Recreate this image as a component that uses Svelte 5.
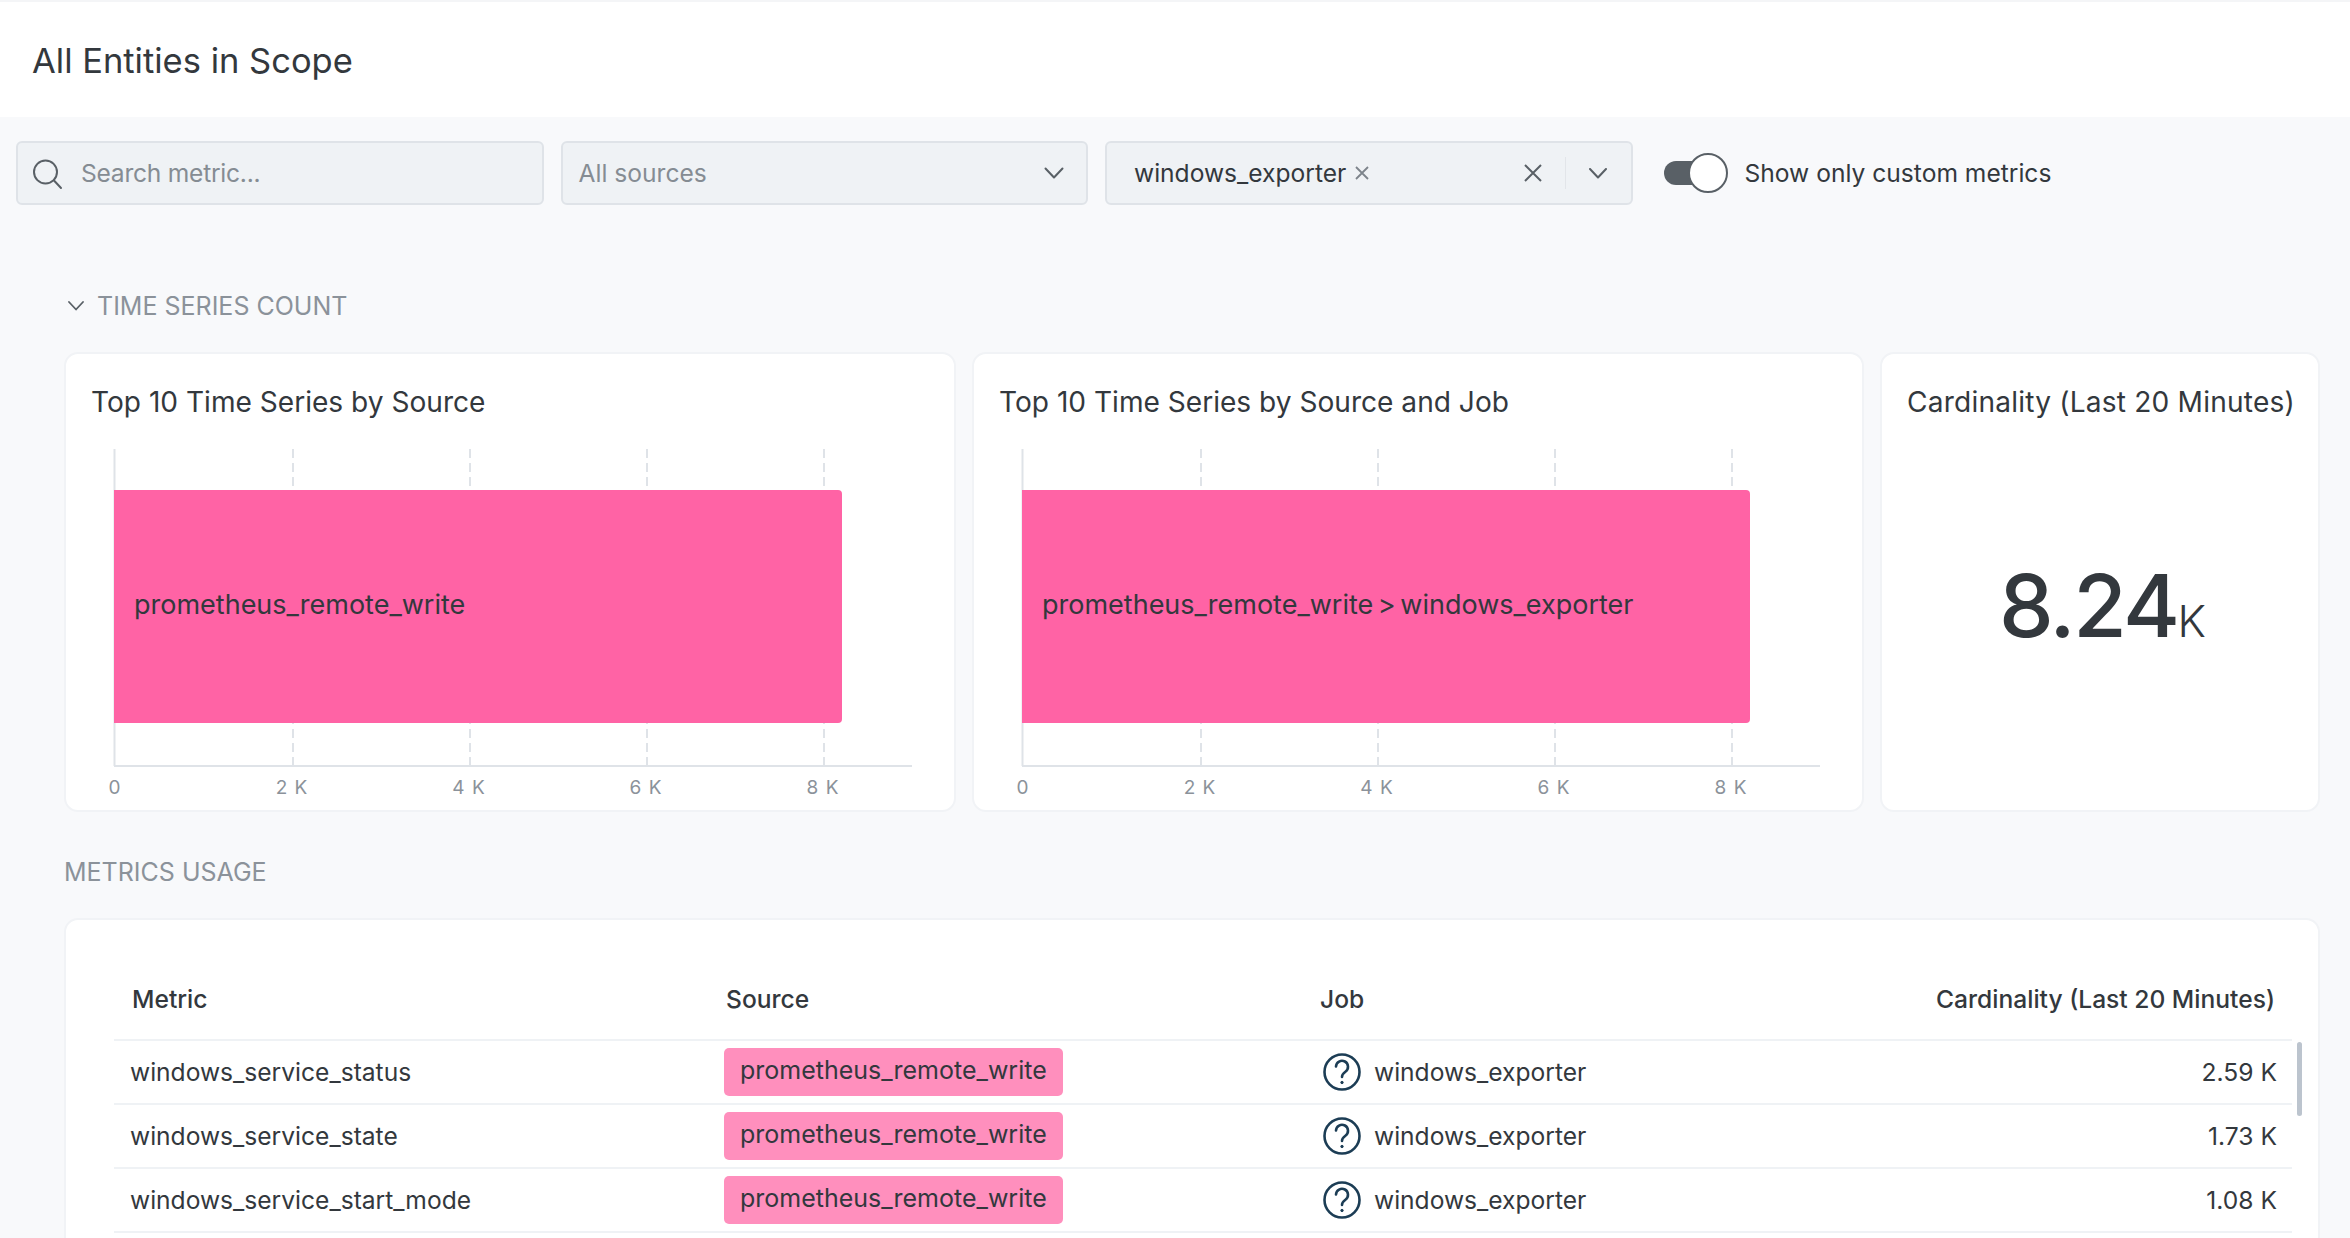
<script>
	const ticks = [
		{ x: 51, label: '0' },
		{ x: 228, label: '2 K' },
		{ x: 405, label: '4 K' },
		{ x: 582, label: '6 K' },
		{ x: 759, label: '8 K' }
	];
	const charts = [
		{ title: 'Top 10 Time Series by Source', label: 'prometheus_remote_write' },
		{ title: 'Top 10 Time Series by Source and Job', label: 'prometheus_remote_write > windows_exporter' }
	];
	const rows = [
		{ metric: 'windows_service_status', value: '2.59 K' },
		{ metric: 'windows_service_state', value: '1.73 K' },
		{ metric: 'windows_service_start_mode', value: '1.08 K' }
	];
</script>

<div class="page">
	<header class="top">
		<h1>All Entities in Scope</h1>
	</header>

	<div class="toolbar">
		<div class="field">
			<svg class="search" width="32" height="32" viewBox="0 0 32 32" fill="none" stroke="#596066" stroke-width="2">
				<circle cx="14.5" cy="14" r="11.5" />
				<path d="M23 22.5l7 7.5" stroke-linecap="round" />
			</svg>
			<span class="placeholder tight">Search metric...</span>
		</div>
		<div class="field select">
			<span class="placeholder">All sources</span>
			<svg class="chev" width="20" height="12" viewBox="0 0 20 12" fill="none" stroke="#596066" stroke-width="2">
				<path d="M1.5 1.5L10 10.5l8.5-9" stroke-linecap="round" stroke-linejoin="round" />
			</svg>
		</div>
		<div class="field multi">
			<span class="chip">windows_exporter</span>
			<svg class="chip-x" width="16" height="16" viewBox="0 0 16 16" stroke="#7d848b" stroke-width="1.8">
				<path d="M2 2l12 12M14 2L2 14" />
			</svg>
			<svg class="clear" width="20" height="20" viewBox="0 0 20 20" stroke="#596066" stroke-width="2">
				<path d="M2 2l16 16M18 2L2 18" />
			</svg>
			<span class="divider"></span>
			<svg class="chev" width="18" height="11" viewBox="0 0 18 11" fill="none" stroke="#596066" stroke-width="2">
				<path d="M1 1l8 8.5L17 1" stroke-linecap="round" stroke-linejoin="round" />
			</svg>
		</div>
		<div class="toggle"><span class="knob"></span></div>
		<span class="toggle-label">Show only custom metrics</span>
	</div>

	<section class="content">
		<div class="label collapsible">
			<svg width="16" height="10" viewBox="0 0 16 10" fill="none" stroke="#596066" stroke-width="1.8">
				<path d="M1 1l7 7.5L15 1" stroke-linecap="round" stroke-linejoin="round" />
			</svg>
			TIME SERIES COUNT
		</div>

		<div class="cards">
			{#each charts as chart}
				<div class="card">
					<h2>{chart.title}</h2>
					<svg class="chart" width="888" height="386" viewBox="0 0 888 386">
						{#each ticks.slice(1) as t}
							<line x1={t.x} x2={t.x} y1="25" y2="341" class="grid" />
						{/each}
						<line x1="49.5" x2="49.5" y1="25" y2="342" class="axis" />
						<line x1="49" x2="847" y1="342" y2="342" class="axis" />
						<path d="M49 66H773a4 4 0 0 1 4 4V295a4 4 0 0 1-4 4H49Z" fill="#ff63a5" />
						<text x="69" y="183" class="bar-label" dominant-baseline="middle">{chart.label}</text>
						{#each ticks as t}
							<text x={t.x - 1} y="370" class="tick" text-anchor="middle">{t.label}</text>
						{/each}
					</svg>
				</div>
			{/each}
			<div class="card stat">
				<h2>Cardinality (Last 20 Minutes)</h2>
				<div class="big">8.24<span class="unit">K</span></div>
			</div>
		</div>

		<div class="label usage">METRICS USAGE</div>

		<div class="card table-card">
			<table>
				<thead>
					<tr>
						<th class="first">Metric</th>
						<th class="source">Source</th>
						<th class="job-head">Job</th>
						<th class="num">Cardinality (Last 20 Minutes)</th>
					</tr>
				</thead>
				<tbody>
					{#each rows as row}
						<tr>
							<td class="metric">{row.metric}</td>
							<td><span class="tag">prometheus_remote_write</span></td>
							<td>
								<div class="job">
									<svg width="38" height="38" viewBox="0 0 38 38" fill="none" stroke="#1c3d55">
										<circle cx="19" cy="19" r="17.5" stroke-width="2.6" />
										<path d="M13 13.5a6 6 0 1 1 9.4 5.2c-2 1.4-3.4 2.4-3.4 5.3" stroke-width="2.6" stroke-linecap="round" />
										<circle cx="19" cy="29.5" r="1.2" fill="#1c3d55" stroke-width="1" />
									</svg>
									windows_exporter
								</div>
							</td>
							<td class="value">{row.value}</td>
						</tr>
					{/each}
				</tbody>
			</table>
			<div class="scrollbar"></div>
		</div>
	</section>
</div>

<style>
	:global(body) {
		margin: 0;
		background: #f8f9fb;
		font-family: Inter, "Liberation Sans", sans-serif;
		color: #33383d;
	}
	.page {
		height: 100vh;
		overflow: hidden;
		box-sizing: border-box;
	}
	.top {
		height: 117px;
		box-sizing: border-box;
		border-top: 2px solid #f4f5f7;
		background: #fff;
		padding: 4px 32px 0;
		display: flex;
		align-items: center;
	}
	h1 {
		margin: 0;
		font-size: 34.5px;
		font-weight: 400;
		line-height: 1;
	}
	.toolbar {
		display: flex;
		align-items: center;
		padding: 24px 0 0 16px;
		font-size: 24.6px;
	}
	.field {
		width: 527.5px;
		height: 64px;
		box-sizing: border-box;
		margin-right: 17px;
		display: flex;
		align-items: center;
		background: #eff2f5;
		border: 2px solid #dfe3e8;
		border-radius: 6px;
		padding: 0 16px;
	}
	.search {
		margin: 2px 18px 0 -3px;
	}
	.placeholder {
		color: #858c93;
	}
	.tight {
		letter-spacing: -0.25px;
	}
	.select {
		justify-content: space-between;
		padding-right: 22px;
	}
	.multi {
		padding: 0 24px 0 27px;
	}
	.chip {
		color: #33383d;
	}
	.chip-x {
		margin-left: 8px;
	}
	.clear {
		margin-left: auto;
	}
	.divider {
		width: 1px;
		height: 32px;
		margin: 0 23px 0 22px;
		background: #e2e5e9;
	}
	.toggle {
		position: relative;
		width: 64px;
		height: 40px;
		margin-left: 14px;
	}
	.toggle::before {
		content: '';
		position: absolute;
		left: 0;
		top: 8px;
		width: 44px;
		height: 24px;
		border-radius: 12px;
		background: #596066;
	}
	.knob {
		position: absolute;
		right: 0;
		top: 0;
		width: 40px;
		height: 40px;
		box-sizing: border-box;
		border: 2px solid #596066;
		border-radius: 50%;
		background: #fff;
	}
	.toggle-label {
		margin-left: 17px;
	}
	.content {
		padding: 0 30px 0 64px;
	}
	.label {
		font-size: 25px;
		line-height: 32px;
		color: #8b929a;
	}
	.collapsible {
		margin-top: 85px;
		display: flex;
		align-items: center;
		gap: 13px;
		padding-left: 4px;
	}
	.cards {
		display: grid;
		grid-template-columns: 892px 892px 1fr;
		gap: 16px;
		margin-top: 30px;
	}
	.card {
		background: #fff;
		border: 2px solid #f1f3f6;
		border-radius: 14px;
		box-sizing: border-box;
	}
	.cards .card {
		height: 460px;
		display: flex;
		flex-direction: column;
	}
	h2 {
		margin: 0;
		padding: 26px 0 0 25px;
		font-size: 28.1px;
		font-weight: 400;
		line-height: 44px;
		white-space: nowrap;
	}
	.stat h2 {
		letter-spacing: 0.2px;
	}
	.chart {
		display: block;
		flex: none;
		margin-left: -1px;
	}
	.grid {
		stroke: #dfe3e8;
		stroke-width: 2;
		stroke-dasharray: 9 5;
	}
	.axis {
		stroke: #dfe3e8;
		stroke-width: 2;
	}
	.bar-label {
		font-size: 27px;
		fill: #33383d;
		word-spacing: -3px;
	}
	.tick {
		font-size: 19px;
		fill: #8b929a;
		letter-spacing: 1px;
	}
	.stat {
		align-items: flex-start;
	}
	.big {
		margin: 132px 0 0 117px;
		font-size: 87px;
		line-height: 100px;
		font-weight: 500;
		letter-spacing: -2.5px;
		white-space: nowrap;
	}
	.unit {
		font-size: 44px;
		font-weight: 300;
		letter-spacing: 0;
		margin-left: 0;
	}
	.usage {
		margin-top: 44px;
	}
	.table-card {
		position: relative;
		margin-top: 30px;
		padding: 0 24px 0 48px;
		height: 600px;
	}
	table {
		width: 2178px;
		table-layout: fixed;
		border-collapse: collapse;
		font-size: 24.6px;
	}
	th {
		height: 120px;
		box-sizing: border-box;
		padding: 38px 0 0;
		font-weight: 500;
		text-align: left;
		border-bottom: 2px solid #eff2f5;
	}
	th.first {
		width: 610px;
		padding-left: 18px;
	}
	th.source {
		width: 596px;
		padding-left: 2px;
	}
	th.num {
		width: 640px;
		text-align: right;
		padding-right: 17px;
	}
	td {
		height: 64px;
		box-sizing: border-box;
		padding: 0;
		border-bottom: 2px solid #eff2f5;
	}
	.metric {
		padding-left: 16px;
	}
	.tag {
		display: inline-block;
		width: 339px;
		height: 48px;
		line-height: 44px;
		box-sizing: border-box;
		padding-left: 16px;
		border-radius: 5px;
		background: #ff8fbd;
		font-size: 25px;
		vertical-align: middle;
		white-space: nowrap;
	}
	.job {
		display: flex;
		align-items: center;
		gap: 13px;
		padding-left: 3px;
	}
	.value {
		text-align: right;
		padding-right: 15px;
	}
	.scrollbar {
		position: absolute;
		left: 2231px;
		top: 122px;
		width: 5px;
		height: 74px;
		border-radius: 3px;
		background: #bcc4ce;
	}
</style>
